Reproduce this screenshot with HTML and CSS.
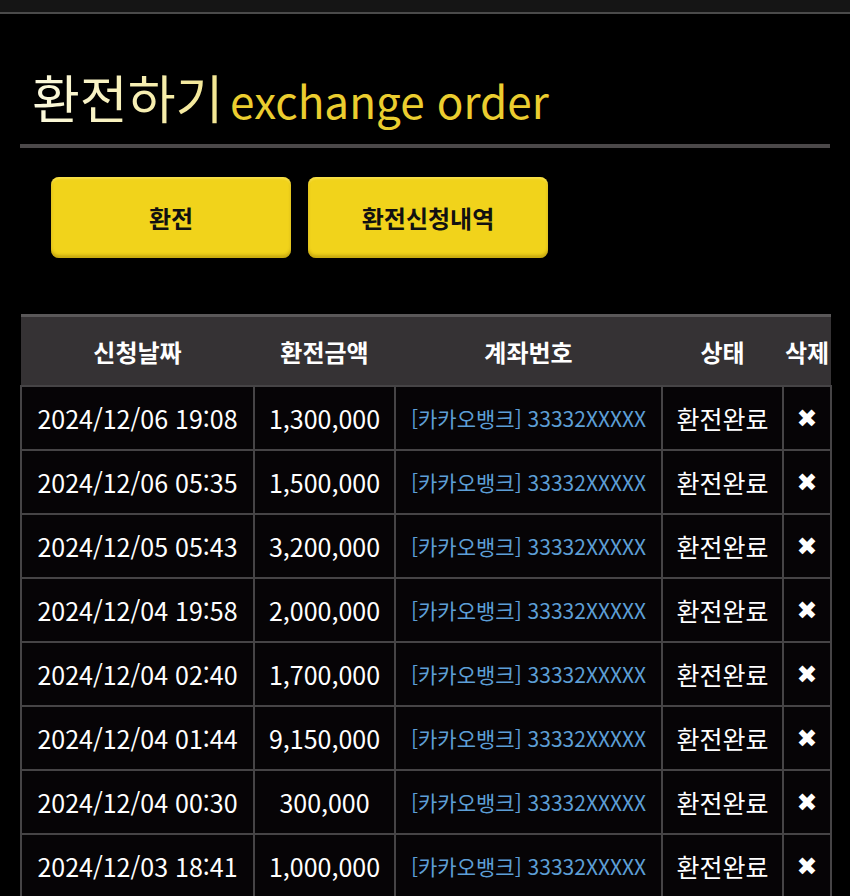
FILE: index.html
```html
<!DOCTYPE html>
<html lang="ko">
<head>
    <meta charset="UTF-8">
    <meta name="viewport" content="width=device-width, initial-scale=1.0">
    <title>환전하기</title>
    <link rel="stylesheet" href="styles.css">
</head>
<body>

    <div class="topbar"></div>

    <div class="content">
        <h2 class="page-title"><span class="title-ko">환전하기</span> <span class="title-en">exchange order</span></h2>

        <div class="tabs">
            <a href="#" class="tab-btn">환전</a>
            <a href="#" class="tab-btn">환전신청내역</a>
        </div>

        <table class="history">
            <colgroup>
                <col class="col-date">
                <col class="col-amount">
                <col class="col-account">
                <col class="col-status">
                <col class="col-del">
            </colgroup>
            <thead>
                <tr>
                    <th>신청날짜</th>
                    <th>환전금액</th>
                    <th>계좌번호</th>
                    <th>상태</th>
                    <th>삭제</th>
                </tr>
            </thead>
            <tbody>
                <tr>
                    <td>2024/12/06 19:08</td>
                    <td>1,300,000</td>
                    <td class="account">[카카오뱅크] 33332XXXXX</td>
                    <td>환전완료</td>
                    <td class="del">✖</td>
                </tr>
                <tr>
                    <td>2024/12/06 05:35</td>
                    <td>1,500,000</td>
                    <td class="account">[카카오뱅크] 33332XXXXX</td>
                    <td>환전완료</td>
                    <td class="del">✖</td>
                </tr>
                <tr>
                    <td>2024/12/05 05:43</td>
                    <td>3,200,000</td>
                    <td class="account">[카카오뱅크] 33332XXXXX</td>
                    <td>환전완료</td>
                    <td class="del">✖</td>
                </tr>
                <tr>
                    <td>2024/12/04 19:58</td>
                    <td>2,000,000</td>
                    <td class="account">[카카오뱅크] 33332XXXXX</td>
                    <td>환전완료</td>
                    <td class="del">✖</td>
                </tr>
                <tr>
                    <td>2024/12/04 02:40</td>
                    <td>1,700,000</td>
                    <td class="account">[카카오뱅크] 33332XXXXX</td>
                    <td>환전완료</td>
                    <td class="del">✖</td>
                </tr>
                <tr>
                    <td>2024/12/04 01:44</td>
                    <td>9,150,000</td>
                    <td class="account">[카카오뱅크] 33332XXXXX</td>
                    <td>환전완료</td>
                    <td class="del">✖</td>
                </tr>
                <tr>
                    <td>2024/12/04 00:30</td>
                    <td>300,000</td>
                    <td class="account">[카카오뱅크] 33332XXXXX</td>
                    <td>환전완료</td>
                    <td class="del">✖</td>
                </tr>
                <tr>
                    <td>2024/12/03 18:41</td>
                    <td>1,000,000</td>
                    <td class="account">[카카오뱅크] 33332XXXXX</td>
                    <td>환전완료</td>
                    <td class="del">✖</td>
                </tr>
            </tbody>
        </table>
    </div>

</body>
</html>
```

FILE: styles.css
```css
body {
    margin: 0;
    background-color: #000;
    font-family: "Noto Sans CJK KR", "Noto Sans", sans-serif;
    color: #fff;
}

.topbar {
    height: 12px;
    background-color: #151515;
    border-bottom: 2px solid #4a4a4a;
}

.content {
    padding: 0 20px;
}

.page-title {
    margin: 0;
    padding: 50px 0 2px 12px;
    border-bottom: 4px solid #4b4849;
    font-weight: normal;
    line-height: 66px;
}

.title-ko {
    font-size: 52px;
    background: linear-gradient(90deg, #fcfadf, #f3e691);
    -webkit-background-clip: text;
    background-clip: text;
    color: transparent;
}

.title-en {
    font-size: 44px;
    color: #ebcd2f;
}

.tabs {
    display: flex;
    gap: 17px;
    padding: 29px 0 0 31px;
}

.tab-btn {
    display: flex;
    align-items: center;
    justify-content: center;
    width: 240px;
    height: 81px;
    background-color: #f1d31b;
    border-radius: 8px;
    box-shadow: inset 0 -3px 3px rgba(150, 120, 0, 0.45), inset 0 2px 2px rgba(255, 240, 120, 0.5);
    color: #111;
    font-size: 24px;
    font-weight: bold;
    text-decoration: none;
}

.history {
    margin-top: 56px;
    width: 810px;
    table-layout: fixed;
    border-collapse: collapse;
}

.col-date { width: 233px; }
.col-amount { width: 141px; }
.col-account { width: 267px; }
.col-status { width: 121px; }
.col-del { width: 48px; }

.history th {
    height: 68px;
    background-color: #353234;
    border-top: 3px solid #5a5859;
    font-size: 24px;
    font-weight: bold;
    text-align: center;
    padding: 0;
}

.history td {
    height: 62px;
    padding: 0;
    background-color: #060406;
    border: 2px solid #464446;
    font-size: 25px;
    text-align: center;
    white-space: nowrap;
}

.history td.account {
    color: #5d9fd6;
    font-size: 21px;
}

.history td.del {
    font-family: "DejaVu Sans", sans-serif;
    font-size: 25px;
}
```
